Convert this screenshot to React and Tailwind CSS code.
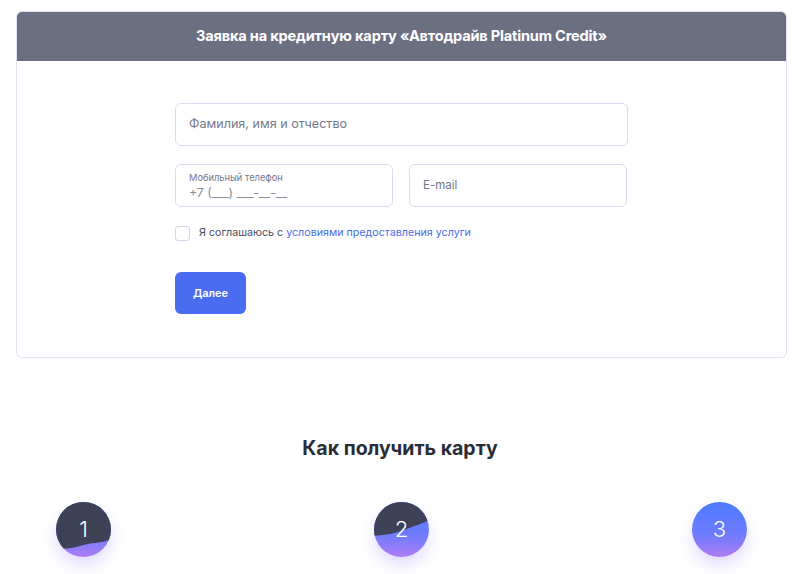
import React from "react";

function Step({ n, wave }) {
  const id = "g" + n;
  return (
    <div className="relative w-[55px] h-[55px] rounded-full shadow-[0_8px_16px_rgba(140,110,255,0.25)]">
      <svg width="55" height="55" viewBox="0 0 55 55" className="block">
        <defs>
          <linearGradient id={id} x1="0" y1="0" x2="0" y2="1">
            <stop offset="0" stopColor="#4d7bff" />
            <stop offset="0.6" stopColor="#6f7cff" />
            <stop offset="1" stopColor="#b07cf6" />
          </linearGradient>
          <clipPath id={"c" + n}>
            <circle cx="27.5" cy="27.5" r="27.5" />
          </clipPath>
        </defs>
        <g clipPath={`url(#c${n})`}>
          <rect width="55" height="55" fill={`url(#${id})`} />
          {wave && <path d={wave} fill="#3e4257" />}
        </g>
      </svg>
      <span className="absolute inset-0 flex items-center justify-center text-white text-[22px] font-light">
        {n}
      </span>
    </div>
  );
}

export default function App() {
  return (
    <div
      className="w-[800px] h-[574px] overflow-hidden bg-white"
      style={{ fontFamily: "Inter, 'Noto Sans', sans-serif" }}
    >
      <div className="pt-[11px] pl-[16px] pr-[13px]">
        <div className="border border-[#e3e3f3] rounded-[6px] overflow-hidden">
          <div className="h-[49px] bg-[#6b6f82] flex items-center justify-center">
            <h1 className="text-white text-[14.6px] font-bold tracking-[-0.2px]">
              Заявка на кредитную карту «Автодрайв Platinum Credit»
            </h1>
          </div>
          <div className="pt-[42px] pb-[43px] pl-[158px]">
            <div className="w-[453px] h-[43px] border border-[#dcdcef] rounded-[6px] flex items-center px-[13px] text-[12.6px] text-[#75778a]">
              Фамилия, имя и отчество
            </div>
            <div className="flex gap-[16px] mt-[18px]">
              <div className="w-[218px] h-[43px] border border-[#dcdcef] rounded-[6px] px-[13px] pt-[7px] flex flex-col">
                <span className="text-[9.3px] text-[#75778a] leading-[12px]">Мобильный телефон</span>
                <span className="text-[12.3px] text-[#8a8c9c] leading-[16px] mt-[1px]">+7 (___) ___-__-__</span>
              </div>
              <div className="w-[218px] h-[43px] border border-[#dcdcef] rounded-[6px] flex items-center px-[13px] text-[11.5px] text-[#75778a]">
                E-mail
              </div>
            </div>
            <div className="flex items-center mt-[18px] gap-[9px]">
              <div className="w-[15px] h-[15px] border border-[#d4d4ea] rounded-[3px]" />
              <span className="text-[10.7px] text-[#4a4c5c]">
                Я соглашаюсь с{" "}
                <span className="text-[#4b6bea]">условиями предоставления услуги</span>
              </span>
            </div>
            <button className="mt-[31px] w-[71px] h-[42px] rounded-[6px] bg-[#4a6cf0] text-white text-[11px] font-semibold">
              Далее
            </button>
          </div>
        </div>
      </div>
      <h2 className="text-center text-[19.5px] font-bold text-[#2a2d38] mt-[76px]">
        Как получить карту
      </h2>
      <div className="flex justify-between pl-[56px] pr-[53px] mt-[39px]">
        <Step n="1" wave="M0 0 H55 V37 C45 42 35 40 24 44 C14 47 6 47 0 46 Z" />
        <Step n="2" wave="M0 0 H55 V18 C48 22 40 24 30 28 C20 32 8 33 0 34 Z" />
        <Step n="3" />
      </div>
    </div>
  );
}
